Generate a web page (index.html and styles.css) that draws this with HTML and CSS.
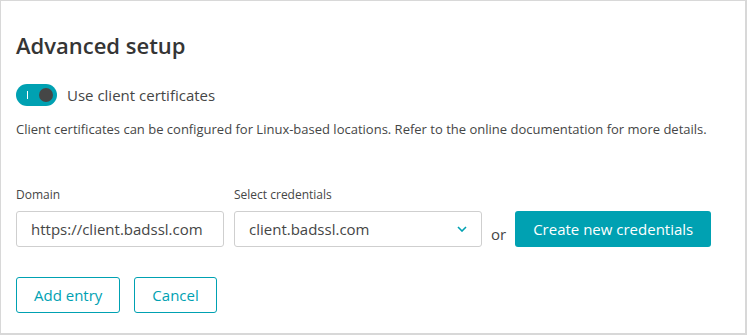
FILE: index.html
```html
<!DOCTYPE html>
<html lang="en">
<head>
  <meta charset="UTF-8" />
  <title>Advanced setup</title>
  <link rel="stylesheet" href="styles.css">
</head>
<body>
  <div class="panel">
    <h2>Advanced setup</h2>

    <label class="switch-row">
      <span class="switch"><span class="tick"></span><span class="knob"></span></span>
      <span>Use client certificates</span>
    </label>
    <p class="note">Client certificates can be configured for Linux-based locations. Refer to the online documentation for more details.</p>

    <div class="fields">
      <div class="field domain">
        <label>Domain</label>
        <div class="input">https://client.badssl.com</div>
      </div>
      <div class="field creds">
        <label>Select credentials</label>
        <div class="input select">
          <span>client.badssl.com</span>
          <svg width="10" height="6" viewBox="0 0 10 6"><path d="M1 1l4 4 4-4" fill="none" stroke="#00a1b2" stroke-width="1.6"/></svg>
        </div>
      </div>
      <span class="or">or</span>
      <button class="btn primary">Create new credentials</button>
    </div>

    <div class="actions">
      <button class="btn outline">Add entry</button>
      <button class="btn outline">Cancel</button>
    </div>
  </div>
</body>
</html>
```

FILE: styles.css
```css
* { margin:0; padding:0; box-sizing:border-box; }
body {
  font-family:"Open Sans", sans-serif;
  color:#454646;
  background:#fff;
}

/* Panel */
.panel {
  width:747px; height:335px;
  border:1px solid #d8d8d8;
  border-right-width:2px; border-bottom-width:2px;
  padding:0 15px;
}
.panel h2 {
  font-size:22px; font-weight:600;
  color:#353535;
  margin-top:30px; line-height:28px;
}

/* Toggle */
.switch-row {
  display:flex; align-items:center; gap:10px;
  margin-top:25px;
  font-size:15px;
}
.switch {
  position:relative;
  width:41px; height:22px;
  border-radius:11px;
  background:#00a1b2;
}
.switch .tick {
  position:absolute; left:11px; top:7px;
  width:1px; height:8px; background:#fff;
}
.switch .knob {
  position:absolute; right:4px; top:4px;
  width:14px; height:14px; border-radius:50%;
  background:#454646;
}
.note {
  font-size:13px; margin-top:14px;
}

/* Fields */
.fields {
  display:flex; align-items:flex-end;
  margin-top:48px;
}
.field label {
  display:block; font-size:12px; margin-bottom:8px;
}
.input {
  height:36px; border:1px solid #cfcfcf; border-radius:3px;
  padding:0 14px; font-size:15px; line-height:34px;
}
.domain .input { width:208px; margin-right:10px; }
.creds .input { width:248px; }
.select { display:flex; justify-content:space-between; align-items:center; }
.or { font-size:15px; margin:0 9px 3px 9px; }

/* Buttons */
.btn {
  font-family:inherit; font-size:15px;
  height:36px; border-radius:3px; cursor:pointer;
}
.primary {
  background:#00a1b2; color:#fff; border:none;
  padding:0 18px;
}
.outline {
  background:#fff; color:#00a1b2;
  border:1px solid #00a1b2; padding:0 17px;
}
.actions {
  display:flex; gap:14px; margin-top:30px;
}
```
